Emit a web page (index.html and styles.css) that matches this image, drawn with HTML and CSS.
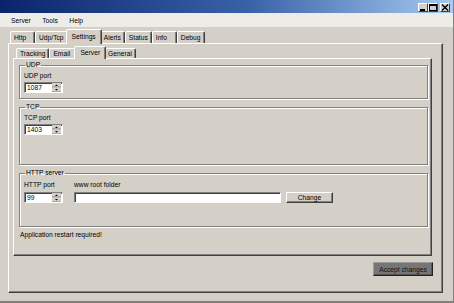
FILE: index.html
```html
<!DOCTYPE html>
<html lang="en">
<head>
  <meta charset="UTF-8">
  <title>Server settings</title>
  <link rel="stylesheet" href="styles.css">
</head>
<body>
  <div class="window">
    <div class="titlebar">
      <span class="cap-btn">
        <svg width="8" height="7" viewBox="0 0 8 7"><rect x="1" y="5" width="5" height="2" fill="#000"/></svg>
      </span>
      <span class="cap-btn">
        <svg width="8" height="7" viewBox="0 0 8 7"><rect x="0.5" y="0.5" width="7" height="6" fill="none" stroke="#000"/><rect x="0" y="0" width="8" height="2" fill="#000"/></svg>
      </span>
      <span class="cap-btn close">
        <svg width="8" height="7" viewBox="0 0 8 7"><path d="M1 0.5 L7 6.5 M7 0.5 L1 6.5" stroke="#000" stroke-width="1.4"/></svg>
      </span>
    </div>

    <div class="menubar">
      <span>Server</span>
      <span>Tools</span>
      <span>Help</span>
    </div>

    <div class="main">
      <div class="tabs">
        <span class="tab">Http</span>
        <span class="tab">Udp/Tcp</span>
        <span class="tab active">Settings</span>
        <span class="tab">Alerts</span>
        <span class="tab">Status</span>
        <span class="tab">Info</span>
        <span class="tab">Debug</span>
      </div>

      <div class="panel outer">
        <div class="tabs sub">
          <span class="tab">Tracking</span>
          <span class="tab">Email</span>
          <span class="tab active">Server</span>
          <span class="tab">General</span>
        </div>

        <div class="panel inner">
          <fieldset class="group">
            <legend>UDP</legend>
            <label>UDP port</label>
            <div class="spin">
              <input class="spin-value" type="text" value="1087">
              <svg class="spin-buttons" width="9" height="9" viewBox="0 0 9 9">
                <rect x="0" y="0" width="9" height="4" fill="#d4d0c8"/>
                <rect x="0" y="5" width="9" height="4" fill="#d4d0c8"/>
                <path d="M0 4 H9 M0 9 H9" stroke="#808080"/>
                <path d="M3 3 H6 L4.5 1.5 Z M3 6 H6 L4.5 7.5 Z" fill="#000"/>
              </svg>
            </div>
          </fieldset>

          <fieldset class="group tcp">
            <legend>TCP</legend>
            <label>TCP port</label>
            <div class="spin">
              <input class="spin-value" type="text" value="1403">
              <svg class="spin-buttons" width="9" height="9" viewBox="0 0 9 9">
                <rect x="0" y="0" width="9" height="4" fill="#d4d0c8"/>
                <rect x="0" y="5" width="9" height="4" fill="#d4d0c8"/>
                <path d="M0 4 H9 M0 9 H9" stroke="#808080"/>
                <path d="M3 3 H6 L4.5 1.5 Z M3 6 H6 L4.5 7.5 Z" fill="#000"/>
              </svg>
            </div>
          </fieldset>

          <fieldset class="group http">
            <legend>HTTP server</legend>
            <div class="http-row">
              <div>
                <label>HTTP port</label>
                <div class="spin">
                  <input class="spin-value" type="text" value="99">
                  <svg class="spin-buttons" width="9" height="9" viewBox="0 0 9 9">
                    <rect x="0" y="0" width="9" height="4" fill="#d4d0c8"/>
                    <rect x="0" y="5" width="9" height="4" fill="#d4d0c8"/>
                    <path d="M0 4 H9 M0 9 H9" stroke="#808080"/>
                    <path d="M3 3 H6 L4.5 1.5 Z M3 6 H6 L4.5 7.5 Z" fill="#000"/>
                  </svg>
                </div>
              </div>
              <div>
                <label>www root folder</label>
                <div class="inline">
                  <input class="field" type="text">
                  <button class="btn" type="button">Change</button>
                </div>
              </div>
            </div>
          </fieldset>

          <p class="note">Application restart required!</p>
        </div>

        <div class="footer">
          <button class="btn accept" type="button">Accept changes</button>
        </div>
      </div>
    </div>
  </div>
</body>
</html>
```

FILE: styles.css
```css
body {
  margin: 0;
  font-family: "Liberation Sans", Arial, sans-serif;
  font-size: 6.7px;
  color: #000;
  background: #d4d0c8;
}
.window {
  width: 454px;
  height: 303px;
  box-sizing: border-box;
  border-right: 1px solid #808080;
  border-bottom: 2px solid #808080;
  overflow: hidden;
}

/* title bar */
.titlebar {
  height: 13px;
  box-sizing: border-box;
  padding: 3px 3px 0 0;
  display: flex;
  justify-content: flex-end;
  background: linear-gradient(to right, #0a246a, #3a62a8 55%, #a6caf0);
}
.cap-btn {
  width: 10px;
  height: 9px;
  box-sizing: border-box;
  display: flex;
  align-items: center;
  justify-content: center;
  background: #d4d0c8;
  border: 1px solid;
  border-color: #fff #404040 #404040 #fff;
}
.cap-btn.close {
  margin-left: 2px;
}

/* menu */
.menubar {
  height: 14px;
  padding-left: 11px;
  display: flex;
  align-items: center;
  gap: 11.5px;
  background: #eeece6;
}

/* tabs */
.main {
  padding: 2px 10px 0 8px;
}
.tabs {
  height: 14px;
  padding-left: 2px;
  display: flex;
  align-items: flex-end;
}
.tab {
  height: 12px;
  min-width: 25px;
  box-sizing: border-box;
  padding: 0 3px;
  display: flex;
  align-items: center;
  border: 1px solid;
  border-bottom: none;
  border-color: #fff #404040 transparent #fff;
  border-radius: 2px 2px 0 0;
  box-shadow: inset -1px 0 #808080;
}
.tab.active {
  position: relative;
  z-index: 1;
  height: 15px;
  margin: 0 -2px -1px;
  padding: 0 5px 2px;
  background: #d4d0c8;
}
.tabs.sub {
  height: 12px;
  padding-left: 3px;
}
.tabs.sub .tab {
  height: 10px;
  min-width: 27px;
}
.tabs.sub .tab.active {
  height: 13px;
  padding-bottom: 1px;
}

/* panels */
.panel {
  box-sizing: border-box;
  border: 1px solid;
  border-color: #fff #404040 #404040 #fff;
  box-shadow: inset -1px -1px #808080;
}
.outer {
  height: 250px;
  padding: 2px 10px 0 4px;
  display: flex;
  flex-direction: column;
}
.inner {
  flex: 1;
  padding: 2px 3px 0 5px;
}
.footer {
  margin: 6px -1px 16px 0;
  display: flex;
  justify-content: flex-end;
}

/* group boxes */
.group {
  margin: 0 0 4px;
  padding: 3px 0 5px 4px;
  min-width: 0;
  border: 1px solid #808080;
  box-shadow: inset 1px 1px #fff, 1px 1px #fff;
}
.group legend {
  margin-left: 1px;
  padding: 0 1px;
  line-height: 8px;
}
.group.tcp {
  padding-bottom: 29px;
}
.group.http {
  padding-top: 4px;
  padding-bottom: 23px;
}
label {
  display: block;
  line-height: 8px;
  margin-bottom: 2px;
}
.http label {
  margin-bottom: 3px;
}
.http-row {
  display: flex;
  gap: 11px;
}
.inline {
  display: flex;
  gap: 5px;
}

/* controls */
.spin {
  width: 39px;
  height: 11px;
  box-sizing: border-box;
  display: flex;
  align-items: center;
  background: #fff;
  border: 1px solid;
  border-color: #808080 #fff #fff #808080;
  box-shadow: inset 1px 1px #404040;
}
.spin-value,
.field {
  font: inherit;
  border: none;
  outline: none;
  background: transparent;
  padding: 0 0 0 2px;
  margin: 0;
}
.spin-value {
  width: 26px;
  flex: 1;
  min-width: 0;
}
.spin-buttons {
  margin-right: 1px;
}
.field {
  width: 207px;
  height: 11px;
  box-sizing: border-box;
  background: #fff;
  border: 1px solid;
  border-color: #808080 #fff #fff #808080;
  box-shadow: inset 1px 1px #404040;
}
.btn {
  font: inherit;
  width: 47px;
  height: 11px;
  padding: 0;
  color: #000;
  background: #d4d0c8;
  border: 1px solid;
  border-color: #fff #404040 #404040 #fff;
  box-shadow: inset -1px -1px #808080;
}
.btn.accept {
  width: 60px;
  height: 14px;
  color: #111;
  background: #767676;
  border-color: #9a9a9a #202020 #202020 #9a9a9a;
  box-shadow: inset -1px -1px #555;
}
.note {
  margin: 3px 0 0 1px;
  line-height: 8px;
}
```
